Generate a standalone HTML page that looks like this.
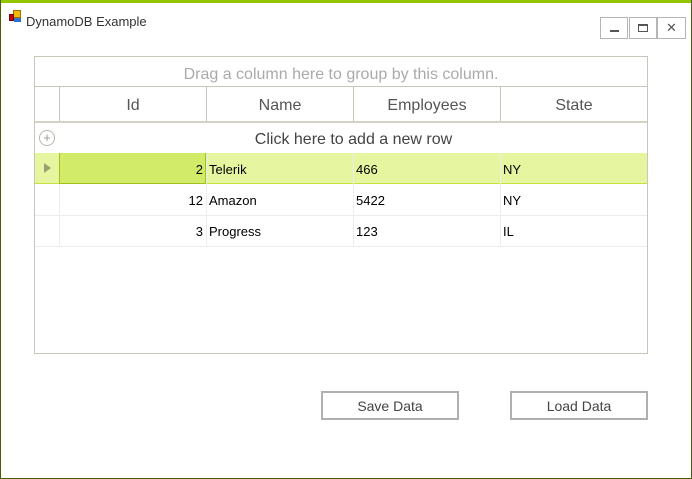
<!DOCTYPE html>
<html><head><style>
*{margin:0;padding:0;box-sizing:border-box}
body{width:692px;height:479px;position:relative;background:#fff;font-family:"Liberation Sans",sans-serif;overflow:hidden}
.a{position:absolute}
.t{font-size:13px;color:#000;line-height:33px;white-space:nowrap}
.h{font-size:16px;color:#555;text-align:center;line-height:37px}
.wb{position:absolute;top:17px;width:28px;height:22px;border:1px solid #b5b5b5;background:#fff}
.btn{position:absolute;top:391px;width:138px;height:29px;border:2px solid #b0b0b0;font-size:14px;color:#444;text-align:center;line-height:26px}
</style></head><body>
<div class="a" style="left:0;top:0;width:692px;height:3px;background:#94c600"></div>
<div class="a" style="left:0;top:0;width:1px;height:479px;background:#4a5d00"></div>
<div class="a" style="right:0;top:0;width:1px;height:479px;background:#4a5d00"></div>
<div class="a" style="left:0;bottom:0;width:692px;height:1px;background:#4a5d00"></div>
<div class="a" style="left:13px;top:10px;width:8px;height:8px;background:#f0b800;border:1px solid #a07000"></div>
<div class="a" style="left:9px;top:14px;width:5px;height:7px;background:#c00;border:1px solid #700"></div>
<div class="a" style="left:14px;top:18px;width:7px;height:4px;background:#3070d0"></div>
<div class="a" style="left:26px;top:14px;font-size:13px;color:#333">DynamoDB Example</div>
<div class="wb" style="left:600px"><div class="a" style="left:9px;top:12px;width:9px;height:2px;background:#555"></div></div>
<div class="wb" style="left:629px"><div class="a" style="left:8px;top:6px;width:10px;height:8px;border:1px solid #555;border-top:2px solid #555"></div></div>
<div class="wb" style="left:657px;width:29px;font-size:13px;text-align:center;line-height:20px;color:#555">✕</div>
<div class="a" style="left:34px;top:56px;width:614px;height:298px;border:1px solid #c8c6b8"></div>
<div class="a" style="left:35px;top:57px;width:612px;height:29px;font-size:16px;color:#aaa;text-align:center;line-height:35px">Drag a column here to group by this column.</div>
<div class="a" style="left:35px;top:86px;width:612px;height:1px;background:#c8c6b8"></div>
<div class="a" style="left:35px;top:121px;width:612px;height:2px;background:#d4d2c6"></div>
<div class="a" style="left:59px;top:87px;width:1px;height:34px;background:#c8c6b8"></div>
<div class="a" style="left:206px;top:87px;width:1px;height:34px;background:#c8c6b8"></div>
<div class="a" style="left:353px;top:87px;width:1px;height:34px;background:#c8c6b8"></div>
<div class="a" style="left:500px;top:87px;width:1px;height:34px;background:#c8c6b8"></div>
<div class="a h" style="left:60px;top:87px;width:146px">Id</div>
<div class="a h" style="left:207px;top:87px;width:146px">Name</div>
<div class="a h" style="left:354px;top:87px;width:146px">Employees</div>
<div class="a h" style="left:501px;top:87px;width:146px">State</div>
<div class="a" style="left:39px;top:130px;width:16px;height:16px;border:1.5px solid #b8b8a8;border-radius:50%;color:#999;font-size:13px;text-align:center;line-height:13px">+</div>
<div class="a" style="left:60px;top:123px;width:587px;font-size:16px;color:#444;text-align:center;line-height:33px">Click here to add a new row</div>
<div class="a" style="left:35px;top:153px;width:612px;height:31px;background:#e6f6a0;border-bottom:1px solid #c8e040"></div>
<div class="a" style="left:59px;top:153px;width:147px;height:31px;background:#d2ec6a;border:1px solid #a0c020;border-top:none"></div>
<div class="a" style="left:44px;top:163px;width:0;height:0;border-left:7px solid #9aa070;border-top:5px solid transparent;border-bottom:5px solid transparent"></div>
<div class="a" style="left:35px;top:215px;width:612px;height:1px;background:#ececec"></div>
<div class="a" style="left:35px;top:246px;width:612px;height:1px;background:#ececec"></div>
<div class="a" style="left:59px;top:184px;width:1px;height:62px;background:#ececec"></div>
<div class="a" style="left:206px;top:153px;width:1px;height:93px;background:#ececec"></div>
<div class="a" style="left:353px;top:153px;width:1px;height:93px;background:#ececec"></div>
<div class="a" style="left:500px;top:153px;width:1px;height:93px;background:#ececec"></div>
<div class="a t" style="left:60px;top:153px;width:143px;text-align:right">2</div>
<div class="a t" style="left:209px;top:153px">Telerik</div>
<div class="a t" style="left:356px;top:153px">466</div>
<div class="a t" style="left:503px;top:153px">NY</div>
<div class="a t" style="left:60px;top:184px;width:143px;text-align:right">12</div>
<div class="a t" style="left:209px;top:184px">Amazon</div>
<div class="a t" style="left:356px;top:184px">5422</div>
<div class="a t" style="left:503px;top:184px">NY</div>
<div class="a t" style="left:60px;top:215px;width:143px;text-align:right">3</div>
<div class="a t" style="left:209px;top:215px">Progress</div>
<div class="a t" style="left:356px;top:215px">123</div>
<div class="a t" style="left:503px;top:215px">IL</div>
<div class="btn" style="left:321px">Save Data</div>
<div class="btn" style="left:510px">Load Data</div>
</body></html>
